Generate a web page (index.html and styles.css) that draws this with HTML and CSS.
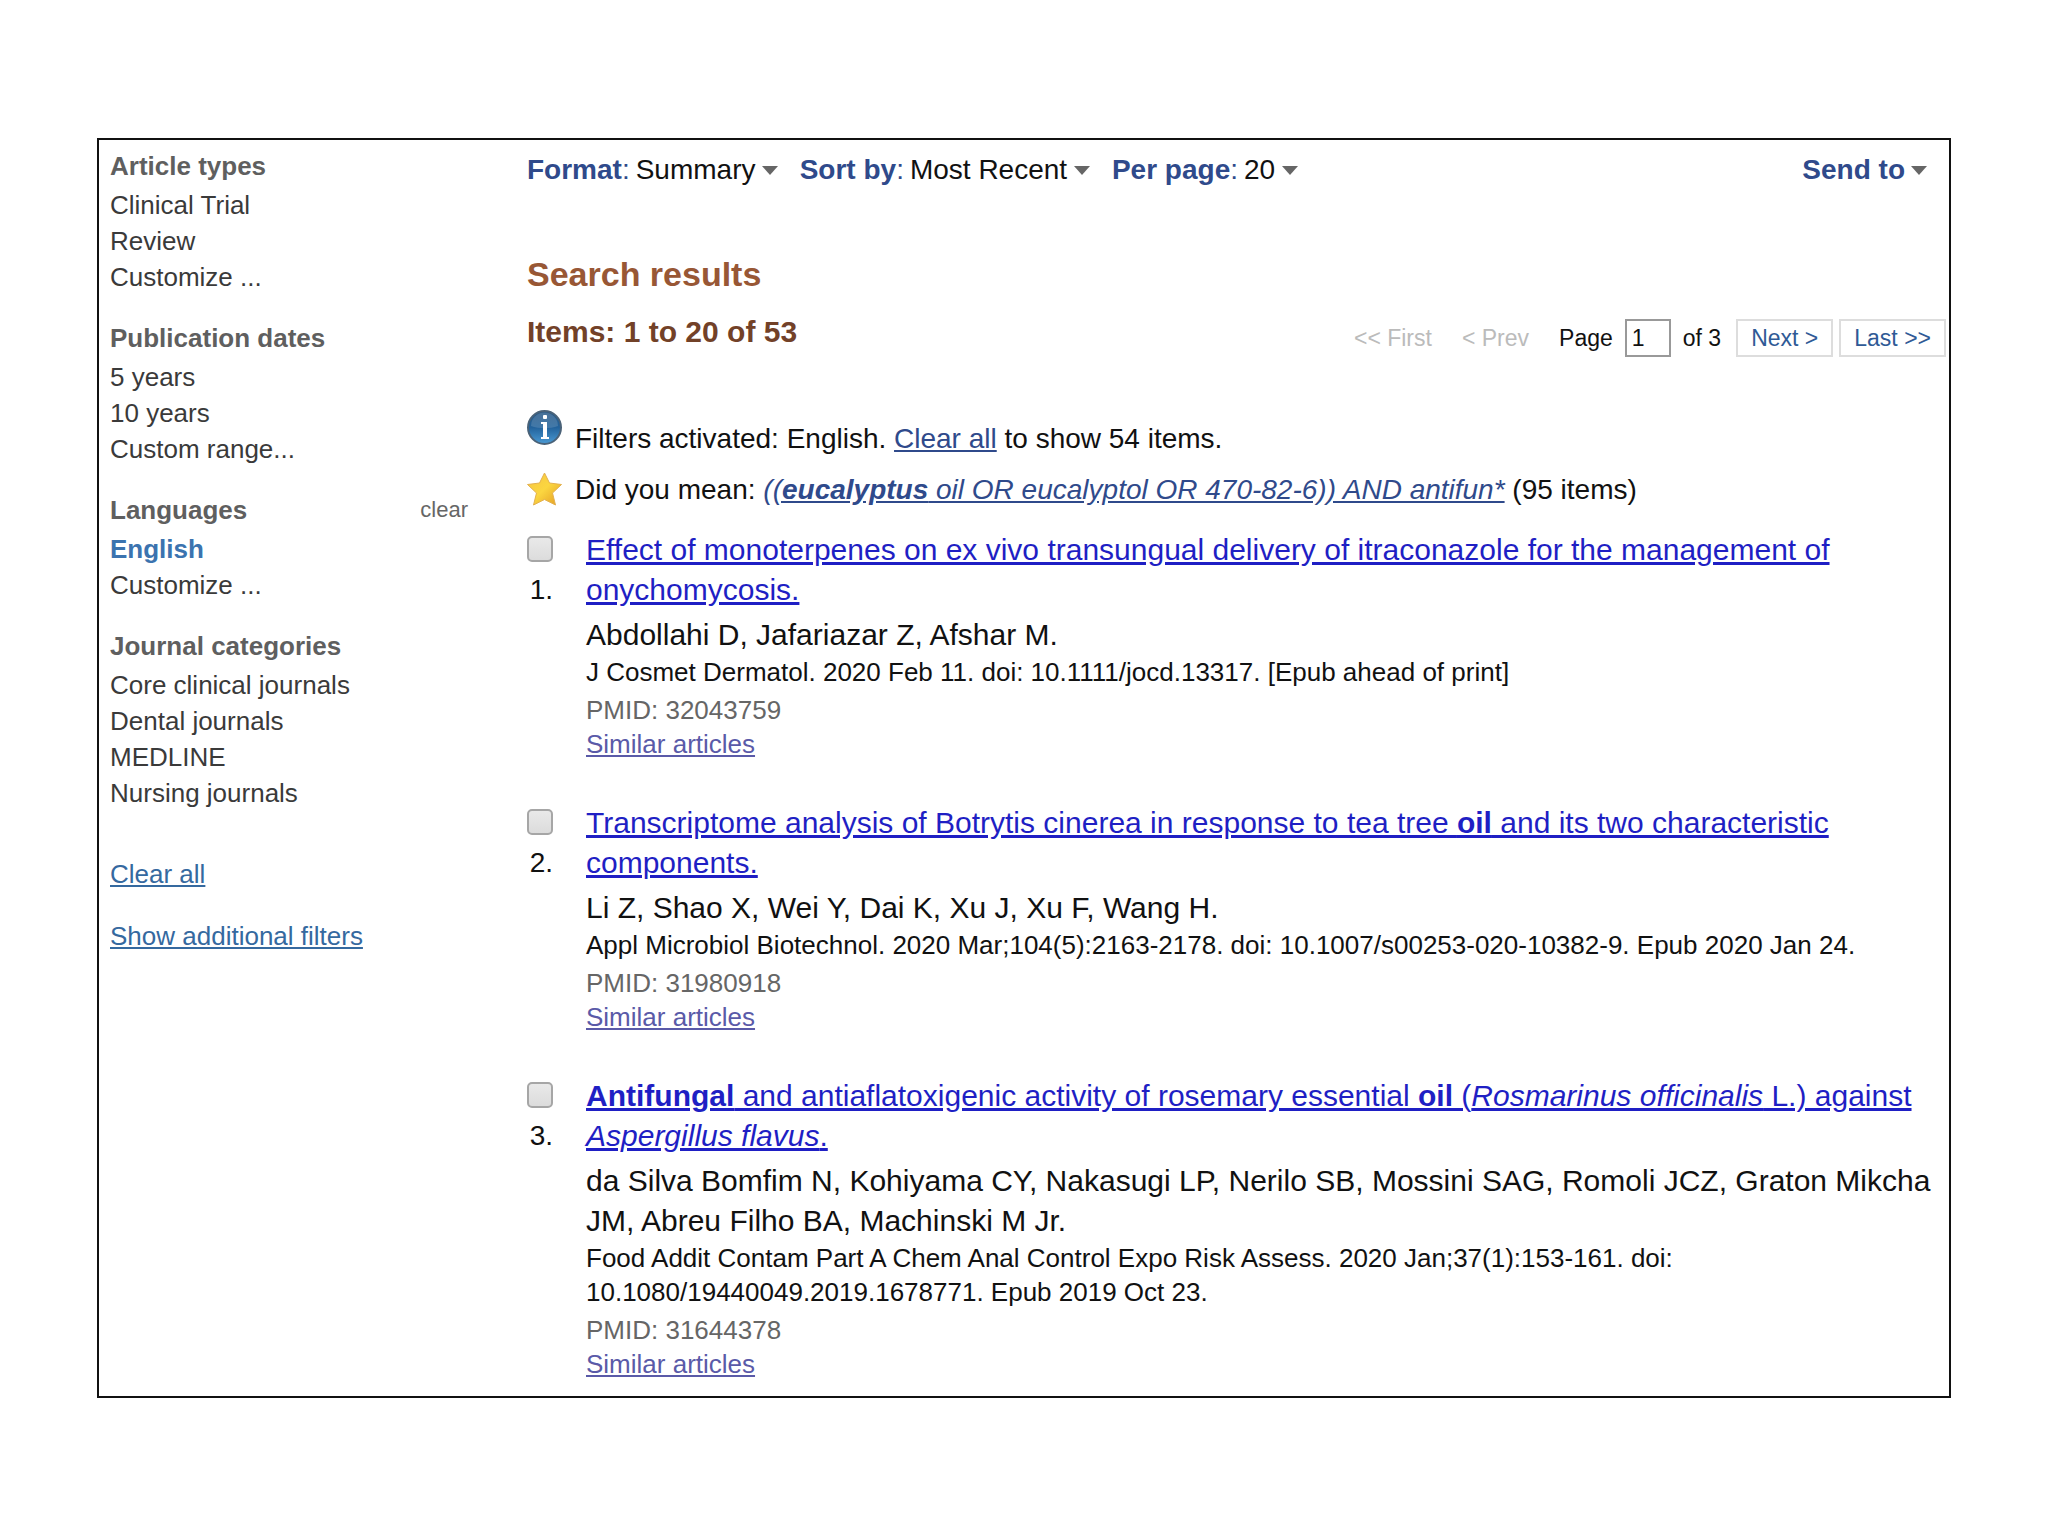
FILE: index.html
```html
<!DOCTYPE html>
<html lang="en">
	<head>
		<meta charset="UTF-8">
		<title>Search results</title>
		<link rel="stylesheet" href="styles.css">
	</head>
	<body>
	<div id="box">

		<!-- filters -->
		<div class="filters">
			<div class="group">
				<h3>Article types</h3>
				<ul>
					<li><a href="#">Clinical Trial</a></li>
					<li><a href="#">Review</a></li>
					<li><a href="#">Customize ...</a></li>
				</ul>
			</div>
			<div class="group">
				<h3>Publication dates</h3>
				<ul>
					<li><a href="#">5 years</a></li>
					<li><a href="#">10 years</a></li>
					<li><a href="#">Custom range...</a></li>
				</ul>
			</div>
			<div class="group">
				<h3>Languages <a class="clear" href="#">clear</a></h3>
				<ul>
					<li><a class="active" href="#">English</a></li>
					<li><a href="#">Customize ...</a></li>
				</ul>
			</div>
			<div class="group">
				<h3>Journal categories</h3>
				<ul>
					<li><a href="#">Core clinical journals</a></li>
					<li><a href="#">Dental journals</a></li>
					<li><a href="#">MEDLINE</a></li>
					<li><a href="#">Nursing journals</a></li>
				</ul>
			</div>
			<div class="more">
				<a href="#">Clear all</a>
				<a href="#">Show additional filters</a>
			</div>
		</div>

		<div class="main">
			<div class="toolbar">
				<div class="drop">
					<label for="format"><b>Format</b>:</label>
					<select id="format"><option>Summary</option></select>
				</div>
				<div class="drop">
					<label for="sort"><b>Sort by</b>:</label>
					<select id="sort"><option>Most Recent</option></select>
				</div>
				<div class="drop">
					<label for="size"><b>Per page</b>:</label>
					<select id="size"><option>20</option></select>
				</div>
				<button class="send" type="button">Send to</button>
			</div>

			<h1>Search results</h1>
			<div class="count">
				<h2>Items: 1 to 20 of 53</h2>
				<div class="pager">
					<span class="off">&lt;&lt; First</span>
					<span class="off">&lt; Prev</span>
					<label for="page">Page</label>
					<input id="page" type="text" value="1">
					<span class="total">of 3</span>
					<a href="#">Next &gt;</a>
					<a href="#">Last &gt;&gt;</a>
				</div>
			</div>

			<div class="note info">
				<svg width="35" height="35" viewBox="0 0 35 35">
					<defs>
						<linearGradient id="blue" x1="0" y1="0" x2="0" y2="1">
							<stop offset="0" stop-color="#2c5a86"/>
							<stop offset="0.5" stop-color="#23639c"/>
							<stop offset="1" stop-color="#4a9ad4"/>
						</linearGradient>
					</defs>
					<circle cx="17.5" cy="17.5" r="16.5" fill="url(#blue)" stroke="#4a6278" stroke-width="2"/>
					<path d="M4 16a13.5 13.5 0 0 1 27 0c-8 3-19 3-27 0z" fill="#fff" opacity=".14"/>
					<rect x="16" y="5" width="4" height="4" rx="1" fill="#fff"/>
					<path d="M14 12h6v15h2v2h-8v-2h2v-13h-2z" fill="#fff"/>
				</svg>
				<p>Filters activated: English. <a href="#">Clear all</a> to show 54 items.</p>
			</div>
			<div class="note">
				<svg width="35" height="35" viewBox="0 0 35 35">
					<defs>
						<linearGradient id="gold" x1="0" y1="0" x2="1" y2="1">
							<stop offset="0" stop-color="#f6c544"/>
							<stop offset="0.5" stop-color="#fbd640"/>
							<stop offset="1" stop-color="#e29a22"/>
						</linearGradient>
					</defs>
					<path d="M17.5 1l5 10 12 1.500-9 8.500 3 12-11-5.500-11 5.500 3-12-9-8.500 12-1.500z" fill="url(#gold)" stroke="#e3b04e" stroke-width="1" stroke-linejoin="round"/>
				</svg>
				<p>Did you mean: <a href="#"><i>((<b>eucalyptus</b> oil OR eucalyptol OR 470-82-6)) AND antifun*</i></a> (95 items)</p>
			</div>

			<ul class="list">
				<li>
					<div class="pick">
						<input type="checkbox" id="r1">
						<label for="r1">1.</label>
					</div>
					<div class="item">
						<a class="title" href="#">Effect of monoterpenes on ex vivo transungual delivery of itraconazole for the management of onychomycosis.</a>
						<p class="authors">Abdollahi D, Jafariazar Z, Afshar M.</p>
						<p class="journal">J Cosmet Dermatol. 2020 Feb 11. doi: 10.1111/jocd.13317. [Epub ahead of print]</p>
						<p class="pmid">PMID: 32043759</p>
						<a class="similar" href="#">Similar articles</a>
					</div>
				</li>
				<li>
					<div class="pick">
						<input type="checkbox" id="r2">
						<label for="r2">2.</label>
					</div>
					<div class="item">
						<a class="title" href="#">Transcriptome analysis of Botrytis cinerea in response to tea tree <b>oil</b> and its two characteristic components.</a>
						<p class="authors">Li Z, Shao X, Wei Y, Dai K, Xu J, Xu F, Wang H.</p>
						<p class="journal">Appl Microbiol Biotechnol. 2020 Mar;104(5):2163-2178. doi: 10.1007/s00253-020-10382-9. Epub 2020 Jan 24.</p>
						<p class="pmid">PMID: 31980918</p>
						<a class="similar" href="#">Similar articles</a>
					</div>
				</li>
				<li>
					<div class="pick">
						<input type="checkbox" id="r3">
						<label for="r3">3.</label>
					</div>
					<div class="item">
						<a class="title" href="#"><b>Antifungal</b> and antiaflatoxigenic activity of rosemary essential <b>oil</b> (<i>Rosmarinus officinalis</i> L.) against <i>Aspergillus flavus</i>.</a>
						<p class="authors">da Silva Bomfim N, Kohiyama CY, Nakasugi LP, Nerilo SB, Mossini SAG, Romoli JCZ, Graton Mikcha JM, Abreu Filho BA, Machinski M Jr.</p>
						<p class="journal">Food Addit Contam Part A Chem Anal Control Expo Risk Assess. 2020 Jan;37(1):153-161. doi:<br>10.1080/19440049.2019.1678771. Epub 2019 Oct 23.</p>
						<p class="pmid">PMID: 31644378</p>
						<a class="similar" href="#">Similar articles</a>
					</div>
				</li>
			</ul>
		</div>

	</div>
	</body>
</html>
```

FILE: styles.css
```css
*{
	box-sizing: border-box;
}
body{
	margin:0;
	background-color: #fff;
	color:#111;
	font-family: "Liberation Sans", Arial, sans-serif;
	font-size:28px;
	line-height: 36px;
}
h1,h2,h3,p,ul{
	margin:0;
	padding:0;
}
ul{
	list-style: none;
}
select,button,input{
	font-family: inherit;
	font-size: inherit;
	line-height: inherit;
	color:inherit;
	margin:0;
	padding:0;
	border:0;
	background: none;
	appearance: none;
}
#box{
	display: flex;
	margin:138px 97px;
	border:2px solid #111;
}

/* left column */
.filters{
	flex:0 0 428px;
	padding:8px 59px 0 11px;
	font-size:26px;
}
.group{
	margin-bottom:25px;
}
.filters h3{
	display: flex;
	justify-content: space-between;
	margin-bottom:3px;
	font-size:26px;
	color:#5f5f5f;
}
.filters h3 .clear{
	font-size:22px;
	font-weight: normal;
	color:#666;
	text-decoration: none;
}
.filters li a{
	color:#3a3a3a;
	text-decoration: none;
}
.filters li a.active{
	color:#3b73af;
	font-weight: bold;
}
.more{
	display: flex;
	flex-direction: column;
	align-items: flex-start;
	gap:26px;
	margin-top:45px;
}
.more a{
	color:#35699f;
}

/* right column */
.main{
	flex:1;
	min-width:0;
	padding:12px 3px 15px 0;
}
.toolbar{
	display: flex;
	gap:22px;
	padding-right:19px;
	color:#2f4a8b;
}
.drop{
	display: flex;
	align-items: center;
	gap:6px;
}
.drop select{
	color:#111;
}
.drop:after,
.send:after{
	content:"";
	border:8px solid transparent;
	border-top:9px solid #666;
	border-bottom:0;
}
.send{
	display: flex;
	align-items: center;
	gap:6px;
	margin-left:auto;
	font-weight: bold;
}
h1{
	margin-top:66px;
	font-size:34px;
	line-height: 40px;
	color:#985735;
}
.count{
	display: flex;
	justify-content: space-between;
	margin-top:20px;
}
h2{
	font-size:30px;
	line-height: 36px;
	color:#724128;
}
.pager{
	display: flex;
	align-items: center;
	margin-top:5px;
	font-size:23px;
}
.pager .off{
	margin-right:30px;
	color:#bbb;
}
.pager .off + label{
	margin-right:12px;
}
.pager input{
	width:46px;
	height:38px;
	padding-left:5px;
	border:2px solid #999;
}
.pager .total{
	margin:0 15px 0 12px;
}
.pager a{
	padding:0 13px;
	border:2px solid #ddd;
	line-height: 34px;
	color:#2f5a96;
	text-decoration: none;
}
.pager a + a{
	margin-left:6px;
}
.note{
	display: flex;
	gap:13px;
	margin-top:15px;
}
.note.info{
	margin-top:53px;
}
.note.info p{
	padding-top:11px;
}
.note a{
	color:#2f4a8b;
}
.list{
	margin-top:22px;
}
.list li{
	display: flex;
	margin-bottom:42px;
}
.list li:last-child{
	margin-bottom:0;
}
.pick{
	flex:0 0 59px;
	padding-top:6px;
}
.pick input{
	display: block;
	width:26px;
	height:26px;
	border:2px solid #a6a6a6;
	border-radius:5px;
	background: linear-gradient(#e9e9e9, #dcdcdc);
}
.pick label{
	display: block;
	width:26px;
	margin-top:10px;
	text-align: right;
}
.item{
	flex:1;
	min-width:0;
}
.title{
	display: block;
	font-size:30px;
	line-height: 40px;
	color:#1f1fc4;
}
.authors{
	margin-top:5px;
	font-size:30px;
	line-height: 40px;
}
.journal,.pmid,.similar{
	font-size:26px;
	line-height: 34px;
}
.pmid{
	margin-top:4px;
	color:#666;
}
.similar{
	display: block;
	color:#5a5aa8;
}
```
